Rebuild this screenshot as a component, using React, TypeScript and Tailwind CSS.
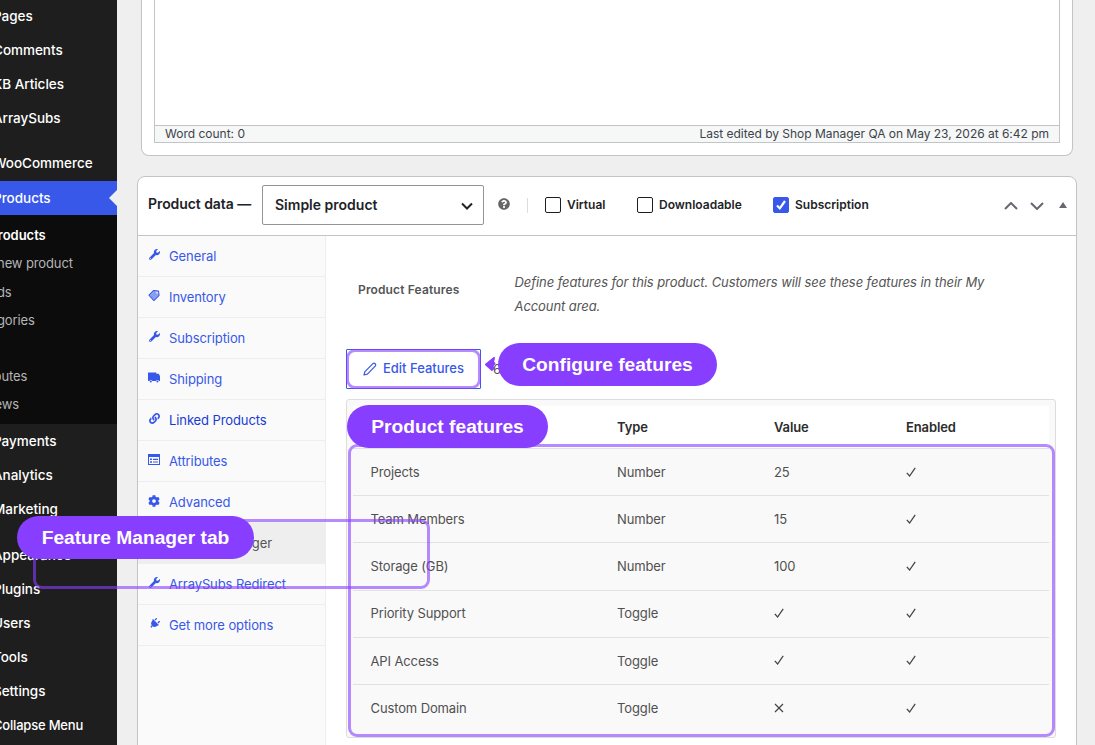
import { ReactNode } from "react"
import {
  FaCog,
  FaLink,
  FaPlug,
  FaQuestionCircle,
  FaWrench,
} from "react-icons/fa"

const TagIcon = () => (
  <svg className="w-[13px] h-[13px]" viewBox="0 0 13 13">
    <path
      d="M1 6.2 6.2 1l5.2.7.6 4.6L6.4 12z"
      fill="#3858e9"
      fillOpacity="0.5"
      stroke="#3858e9"
      strokeWidth="1.1"
      strokeLinejoin="round"
    />
    <path
      d="M3.2 6.4 6.4 9.6M4.8 4.8 8 8M6.2 3.2l3.4 3.4"
      stroke="#3858e9"
      strokeWidth="0.8"
      strokeOpacity="0.6"
    />
    <circle cx="9.8" cy="3.4" r="0.9" fill="#fafafa" />
  </svg>
)

const TruckIcon = () => (
  <svg className="w-[13px] h-[11px]" viewBox="0 0 13 11" fill="#3858e9">
    <path d="M0 0h9v1.5h2.6L13 4v5.4h-1.2a1.7 1.7 0 0 0-3.2 0H4.6a1.7 1.7 0 0 0-3.2 0H0z" />
    <circle cx="3" cy="9.9" r="1.1" />
    <circle cx="10.2" cy="9.9" r="1.1" />
  </svg>
)

const ListIcon = () => (
  <svg className="w-[12px] h-[11px]" viewBox="0 0 12 11">
    <rect x="0.5" y="0.5" width="11" height="10" fill="#fafafa" stroke="#3858e9" />
    <path d="M0 0h12v3H0z" fill="#3858e9" />
    <path d="M2 4.5h2v1.6H2zM2 7.2h2v1.6H2z" fill="#3858e9" />
    <path d="M5 5.4h5M5 8h5" stroke="#3858e9" strokeWidth="1.2" />
  </svg>
)

type MenuItem = { label: string; className: string }

const topMenu: MenuItem[] = [
  { label: "Pages", className: "h-[34px]" },
  { label: "Comments", className: "h-[34px]" },
  { label: "KB Articles", className: "h-[34px]" },
  { label: "ArraySubs", className: "h-[34px]" },
  { label: "WooCommerce", className: "h-[35px] mt-[11px]" },
]

const bottomMenu: MenuItem[] = [
  { label: "Payments", className: "h-[34px]" },
  { label: "Analytics", className: "h-[34px]" },
  { label: "Marketing", className: "h-[34px]" },
  { label: "Appearance", className: "h-[34px] mt-[12px]" },
  { label: "Plugins", className: "h-[34px]" },
  { label: "Users", className: "h-[34px]" },
  { label: "Tools", className: "h-[34px]" },
  { label: "Settings", className: "h-[34px]" },
  {
    label: "Collapse Menu",
    className: "h-[34px] pt-[2px] text-[13px] tracking-[-0.2px]",
  },
]

const subMenu = [
  "Add new product",
  "Brands",
  "Categories",
  "",
  "Attributes",
  "Reviews",
]

const SideItem = ({ label, className }: MenuItem) => (
  <div className={`flex items-center ${className}`}>
    <span className="-ml-[7px]">{label}</span>
  </div>
)

const Sidebar = () => (
  <nav className="w-[117px] shrink-0 overflow-hidden whitespace-nowrap bg-[#1e1e1e] text-[13.5px] tracking-[-0.02px] font-medium text-white">
    <div className="-mt-px">
      {topMenu.map((item) => (
        <SideItem key={item.label} {...item} />
      ))}
    </div>
    <div className="flex items-center justify-between h-[34px] bg-[#3858e9]">
      <span className="-ml-[7px]">Products</span>
      <svg className="w-2 h-4" viewBox="0 0 8 16">
        <path d="M8 0v16L0 8z" fill="#efefef" />
      </svg>
    </div>
    <div className="h-[209px] pt-[7px] bg-[#0c0c0c] text-[13px] font-normal text-[#b5b5b5]">
      <div className="flex items-center h-[28px] font-semibold text-white">
        <span className="-ml-[30px]">All Products</span>
      </div>
      {subMenu.map((label, i) => (
        <div
          key={i}
          className="flex items-center h-[28.2px] tracking-[-0.12px]"
        >
          <span className="-ml-[31px]">{label}</span>
        </div>
      ))}
    </div>
    {bottomMenu.map((item) => (
      <SideItem key={item.label} {...item} />
    ))}
  </nav>
)

const tabs: { label: string; icon: ReactNode; active?: boolean }[] = [
  { label: "General", icon: <FaWrench className="w-[11px] h-[11px]" /> },
  { label: "Inventory", icon: <TagIcon /> },
  { label: "Subscription", icon: <FaWrench className="w-[11px] h-[11px]" /> },
  { label: "Shipping", icon: <TruckIcon /> },
  { label: "Linked Products", icon: <FaLink className="w-[11px] h-[11px]" /> },
  { label: "Attributes", icon: <ListIcon /> },
  { label: "Advanced", icon: <FaCog className="w-[12px] h-[12px]" /> },
  {
    label: "Feature Manager",
    icon: <FaWrench className="w-[11px] h-[11px]" />,
    active: true,
  },
  {
    label: "ArraySubs Redirect",
    icon: <FaWrench className="w-[11px] h-[11px]" />,
  },
  {
    label: "Get more options",
    icon: <FaPlug className="w-[11px] h-[11px] rotate-45" />,
  },
]

const Tabs = () => (
  <div className="w-[188px] shrink-0 border-r border-[#eee] bg-[#fafafa]">
    {tabs.map(({ label, icon, active }) => (
      <div
        key={label}
        className={`flex items-center h-[41px] pt-[2px] pl-[10px] border-b border-[#eee] text-[13px] tracking-[-0.1px] ${
          active ? "bg-[#eee] text-[#555]" : "text-[#3858e9]"
        }`}
      >
        <span className="flex justify-center w-[12px] mb-[5px] mr-[9px]">
          {icon}
        </span>
        <span className={label === "Linked Products" ? "text-[#183ad6]" : ""}>
          {label}
        </span>
      </div>
    ))}
  </div>
)

const Check = () => (
  <svg className="w-[10px] h-[10px] mb-[2px]" viewBox="0 0 10 10" fill="none">
    <path d="M.8 5.8 3.6 9 9.2.8" stroke="#444" strokeWidth="1.25" />
  </svg>
)

const Cross = () => (
  <svg className="w-[10px] h-[10px] mb-px" viewBox="0 0 10 10" fill="none">
    <path d="M1 1l8 8M9 1 1 9" stroke="#444" strokeWidth="1.2" />
  </svg>
)

const features: { name: string; type: string; value: ReactNode }[] = [
  { name: "Projects", type: "Number", value: "25" },
  { name: "Team Members", type: "Number", value: "15" },
  { name: "Storage (GB)", type: "Number", value: "100" },
  { name: "Priority Support", type: "Toggle", value: <Check /> },
  { name: "API Access", type: "Toggle", value: <Check /> },
  { name: "Custom Domain", type: "Toggle", value: <Cross /> },
]

const columns =
  "grid grid-cols-[246.5px_157px_132px_1fr] items-center pl-[17.5px]"

const FeatureTable = () => (
  <div className="w-[710px] h-[339px] p-[6px] border border-[#ddd] rounded-[3px] bg-[#f9f9f9] text-[13px] tracking-[-0.12px] text-[#505050]">
    <div
      className={`${columns} h-[42px] pt-[2px] bg-white font-semibold text-[#2c2c2c]`}
    >
      <span>Feature</span>
      <span>Type</span>
      <span>Value</span>
      <span>Enabled</span>
    </div>
    {features.map(({ name, type, value }) => (
      <div
        key={name}
        className={`${columns} h-[47.2px] pt-px border-t border-[#e1e1e1]`}
      >
        <span>{name}</span>
        <span>{type}</span>
        <span>{value}</span>
        <Check />
      </div>
    ))}
  </div>
)

const Checkbox = ({ label, checked }: { label: string; checked?: boolean }) => (
  <label className="flex items-center gap-[6px]">
    <span
      className={`flex items-center justify-center w-4 h-4 border rounded-[2px] ${
        checked ? "border-[#3858e9] bg-[#3858e9]" : "border-[#1e1e1e] bg-white"
      }`}
    >
      {checked && (
        <svg className="w-3 h-3" viewBox="0 0 12 12" fill="none">
          <path d="M2 6.5 4.8 9.4 10 2" stroke="#fff" strokeWidth="2.2" />
        </svg>
      )}
    </span>
    {label}
  </label>
)

const Chevron = ({ d, className }: { d: string; className: string }) => (
  <svg className={className} viewBox="0 0 14 8" fill="none">
    <path d={d} stroke="currentColor" strokeWidth="2" />
  </svg>
)

const ProductHeader = () => (
  <div className="flex items-center h-[59px] pb-[2px] pl-[10px] border-b border-[#c3c4c7] text-[12px] font-semibold text-[#1d2327]">
    <span className="w-[114px] pb-[3px] text-[14px] tracking-[-0.07px] whitespace-nowrap">
      Product data —
    </span>
    <div className="flex items-center justify-between w-[222px] h-[40px] px-[12px] border border-[#949494] rounded-[2px] text-[14px]">
      <span className="pb-px">Simple product</span>
      <Chevron
        d="M2 1.5l5 5 5-5"
        className="w-[14px] h-[8px] -mr-[3px] mt-px stroke-[1.6]"
      />
    </div>
    <FaQuestionCircle className="w-[12px] h-[12px] ml-[14px] mb-[3px] text-[#666]" />
    <div className="w-px h-[15px] ml-[17px] mr-[17px] bg-[#ddd]" />
    <div className="w-[92px]">
      <Checkbox label="Virtual" />
    </div>
    <div className="w-[136px]">
      <Checkbox label="Downloadable" />
    </div>
    <Checkbox label="Subscription" checked />
    <div className="flex items-center ml-auto mr-[9px] pt-px gap-[12px] text-[#646970]">
      <Chevron d="M1 7l6-6 6 6" className="w-[14px] h-[8px]" />
      <Chevron d="M1 1l6 6 6-6" className="w-[14px] h-[8px]" />
      <svg className="w-[8px] h-[6px] ml-[3px] mb-px" viewBox="0 0 8 6">
        <path d="M4 0l4 6H0z" fill="currentColor" />
      </svg>
    </div>
  </div>
)

const pill =
  "absolute flex items-center justify-center h-[43px] pt-px rounded-full bg-[#873eff] font-['Liberation_Sans',sans-serif] text-[19.2px] font-bold text-white whitespace-nowrap"
const ring = "absolute border-[3px] border-[#873eff]/60 rounded-[9px]"

const Annotations = () => (
  <>
    <div className={`${ring} left-[346px] top-[349px] w-[135px] h-[40px]`} />
    <div className={`${ring} left-[348px] top-[444px] w-[707px] h-[293px]`} />
    <div className={`${ring} left-[33px] top-[519px] w-[397px] h-[70px]`} />
    <svg
      className="absolute left-[484px] top-[355px] w-[16px] h-[20px]"
      viewBox="0 0 16 20"
    >
      <path
        d="M2 9.5 10 3 9 7l1.5 1.5L8.5 11l1 2L8 15z"
        fill="#873eff"
        stroke="#873eff"
        strokeWidth="2"
        strokeLinejoin="round"
      />
    </svg>
    <div className={`${pill} left-[498px] top-[343px] w-[219px]`}>
      Configure features
    </div>
    <div className={`${pill} left-[347px] top-[405px] w-[201px]`}>
      Product features
    </div>
    <div className={`${pill} left-[17px] top-[516px] w-[237px]`}>
      Feature Manager tab
    </div>
  </>
)

const App = () => {
  return (
    <div className="relative flex w-[1095px] h-[745px] overflow-hidden bg-[#efefef] font-['Inter',sans-serif]">
      <Sidebar />
      <main className="flex flex-col w-[978px] pl-[20px]">
        <section className="w-[932px] h-[156px] ml-[4px] px-[12px] pb-[12px] border border-t-0 border-[#c3c4c7] rounded-b-[8px] bg-white">
          <div className="flex flex-col justify-end h-[143px] border border-t-0 border-[#c3c4c7]">
            <div className="flex items-center justify-between h-[17px] px-[10px] border-t border-[#c3c4c7] bg-[#f6f7f7] text-[12px] text-[#3c434a]">
              <span>Word count: 0</span>
              <span className="tracking-[-0.02px]">
                Last edited by Shop Manager QA on May 23, 2026 at 6:42 pm
              </span>
            </div>
          </div>
        </section>
        <section className="flex flex-col w-[940px] h-[600px] shrink-0 mt-[20px] border border-[#c3c4c7] rounded-t-[8px] bg-white">
          <ProductHeader />
          <div className="flex flex-1">
            <Tabs />
            <div className="flex-1 pl-[20px] pt-[34px]">
              <div className="flex h-[79px] pl-[12px] text-[#555]">
                <span className="w-[156.5px] pt-[11px] text-[12px] tracking-[0.14px] font-semibold">
                  Product Features
                </span>
                <p className="w-[500px] text-[13px] leading-[24px] tracking-[-0.08px] italic">
                  Define features for this product. Customers will see these
                  features in their My Account area.
                </p>
              </div>
              <div className="flex items-center mb-[10px]">
                <button className="flex items-center justify-center w-[135px] h-[40px] gap-[6px] border border-[#3858e9] rounded-[1px] text-[13px] font-medium text-[#3858e9]">
                  <svg className="w-[14px] h-[14px]" viewBox="0 0 14 14" fill="none">
                    <path
                      d="M1 13l.9-3.4 7.8-7.8a1.7 1.7 0 0 1 2.5 2.4l-7.8 7.9z"
                      stroke="currentColor"
                      strokeWidth="1.2"
                      strokeLinejoin="round"
                    />
                  </svg>
                  Edit Features
                </button>
                <span className="ml-[12px] pt-[2px] text-[13px] text-[#555]">
                  6
                </span>
              </div>
              <FeatureTable />
            </div>
          </div>
        </section>
      </main>
      <Annotations />
    </div>
  )
}

export default App
